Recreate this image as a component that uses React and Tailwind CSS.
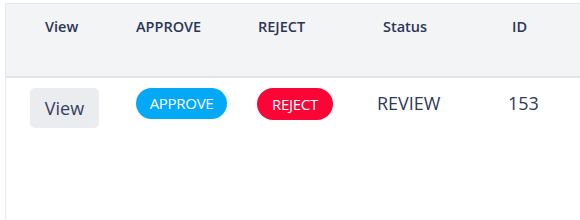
export default function App() {
  const font = { fontFamily: '"Open Sans", "Noto Sans", sans-serif' };
  return (
    <div className="w-[580px] h-[220px] overflow-hidden bg-white" style={font}>
      <div className="ml-[5px] mt-[3px] w-[620px] h-[240px] border-l border-t border-[#e9e9eb] bg-white">
        <div className="grid grid-cols-[114px_120px_120px_120px_1fr] h-[74px] bg-[#f3f4f6] border-b-2 border-[#e2e4e9] text-[14.5px] font-semibold text-[#2b3655] leading-6">
          <div className="pl-[39px] pt-[11px]">View</div>
          <div className="pl-[16px] pt-[11px]">APPROVE</div>
          <div className="pl-[18px] pt-[11px]">REJECT</div>
          <div className="pl-[23px] pt-[11px]">Status</div>
          <div className="pl-[32px] pt-[11px]">ID</div>
        </div>
        <div className="grid grid-cols-[114px_120px_120px_120px_1fr] pt-[10px] items-start text-[#2e3a58]">
          <div className="pl-[24px]">
            <button className="w-[69px] h-[40px] rounded-[5px] bg-[#eaecf0] text-[18px] text-[#34405c] flex items-center justify-center">
              View
            </button>
          </div>
          <div className="pl-[16px]">
            <span className="w-[91px] h-[31px] rounded-full bg-[#03a9f4] text-white text-[15px] tracking-[-0.3px] flex items-center justify-center">
              APPROVE
            </span>
          </div>
          <div className="pl-[17px]">
            <span className="w-[76px] h-[32px] rounded-full bg-[#fa0536] text-white text-[15px] tracking-[-0.3px] flex items-center justify-center">
              REJECT
            </span>
          </div>
          <div className="pl-[17px] h-[31px] flex items-center text-[18px]">REVIEW</div>
          <div className="pl-[28px] h-[31px] flex items-center text-[18px]">153</div>
        </div>
      </div>
    </div>
  );
}
